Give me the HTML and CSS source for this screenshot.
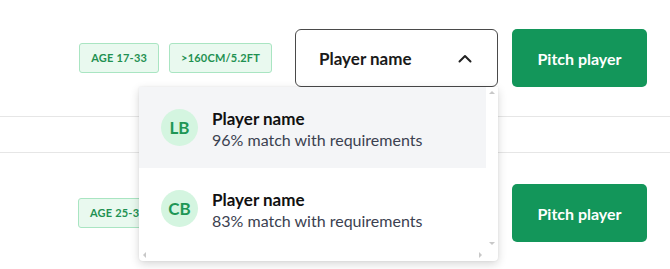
FILE: index.html
```html
<!DOCTYPE html>
<html lang="en">

<head>
    <meta charset="UTF-8">
    <meta name="viewport" content="width=device-width, initial-scale=1.0">
    <title>Pitch players</title>
    <link rel="stylesheet" href="styles.css">
</head>

<body>
    <div class="request-row">
        <div class="tags">
            <span class="tag">Age 17-33</span>
            <span class="tag">&gt;160cm/5.2ft</span>
        </div>
        <div class="player-select open">
            <button class="select-box" type="button">
                <span>Player name</span>
                <svg class="chevron" width="14" height="9" viewBox="0 0 14 9">
                    <path d="M1.5 7.5 L7 2 L12.5 7.5" fill="none" stroke="#222" stroke-width="2" stroke-linecap="round" stroke-linejoin="round"/>
                </svg>
            </button>
            <ul class="player-menu">
                <li class="player-option active">
                    <span class="avatar">LB</span>
                    <div class="player-info">
                        <strong>Player name</strong>
                        <span>96% match with requirements</span>
                    </div>
                </li>
                <li class="player-option">
                    <span class="avatar">CB</span>
                    <div class="player-info">
                        <strong>Player name</strong>
                        <span>83% match with requirements</span>
                    </div>
                </li>
                <li class="scroll-v">
                    <span class="arrow up"></span>
                    <span class="arrow down"></span>
                </li>
                <li class="scroll-h">
                    <span class="arrow left"></span>
                    <span class="arrow right"></span>
                </li>
            </ul>
        </div>
        <button class="pitch-btn" type="button">Pitch player</button>
    </div>

    <div class="spacer-row"></div>

    <!-- second request: mostly hidden under the open menu -->
    <div class="request-row second">
        <div class="tags single">
            <span class="tag">Age 25-35</span>
        </div>
        <div class="player-select">
            <div class="select-box empty"></div>
        </div>
        <button class="pitch-btn" type="button">Pitch player</button>
    </div>
</body>

</html>
```

FILE: styles.css
```css
* {
    margin: 0;
    padding: 0;
    box-sizing: border-box;
    font-family: Lato, "Noto Sans", sans-serif;
}

body {
    background: #ffffff;
    color: #1c1c1c;
    width: 670px;
    height: 269px;
    overflow: hidden;
}

.request-row {
    height: 117px;
    display: flex;
    align-items: center;
    justify-content: flex-end;
    padding-right: 23px;
    border-bottom: 1px solid #e6e6e6;
}

.request-row.second {
    height: 120px;
    border-bottom: none;
}

.spacer-row {
    height: 36px;
    border-bottom: 1px solid #e6e6e6;
}

.tags {
    display: flex;
    gap: 10px;
    margin-right: 23px;
}

.tags.single {
    width: 194px;
}

.tag {
    display: inline-block;
    height: 30px;
    line-height: 28px;
    padding: 0 11px;
    background: #e9f9ef;
    border: 1px solid #a9e5c2;
    border-radius: 3px;
    color: #1f9152;
    font-size: 11px;
    font-weight: 700;
    letter-spacing: 0.2px;
    text-transform: uppercase;
}

.player-select {
    position: relative;
    margin-right: 14px;
}

.select-box {
    width: 203px;
    height: 58px;
    display: flex;
    align-items: center;
    justify-content: space-between;
    padding: 0 25px 0 23px;
    background: #ffffff;
    border: 1px solid #4a4a4a;
    border-radius: 6px;
    font-size: 17px;
    font-weight: 700;
    color: #1a1a1a;
}

.player-menu {
    position: absolute;
    top: 58px;
    right: 0;
    width: 359px;
    height: 174px;
    list-style: none;
    background: #ffffff;
    border-radius: 0 0 4px 4px;
    box-shadow: 0 3px 10px rgba(0, 0, 0, 0.16), 0 0 2px rgba(0, 0, 0, 0.08);
    padding-right: 12px;
    z-index: 10;
}

.player-option {
    height: 81px;
    display: flex;
    align-items: center;
    padding-left: 22px;
    gap: 14px;
}

.player-option.active {
    background: #f4f5f7;
}

.avatar {
    width: 37px;
    height: 37px;
    border-radius: 50%;
    background: #d4f5e0;
    color: #1e9655;
    font-size: 17px;
    font-weight: 700;
    display: flex;
    align-items: center;
    justify-content: center;
}

.player-info {
    display: flex;
    flex-direction: column;
    gap: 1px;
    padding-top: 3px;
}

.player-info strong {
    font-size: 17px;
    font-weight: 700;
    color: #111111;
    line-height: 21px;
}

.player-info span {
    font-size: 16px;
    color: #3b4150;
    line-height: 20px;
}

.scroll-v {
    position: absolute;
    top: 0;
    right: 0;
    width: 12px;
    height: 162px;
}

.scroll-h {
    position: absolute;
    left: 0;
    bottom: 0;
    width: 347px;
    height: 12px;
}

.arrow {
    position: absolute;
    width: 0;
    height: 0;
    border: 3px solid transparent;
}

.arrow.up {
    top: 4px;
    left: 3px;
    border-bottom-color: #c8c8c8;
    border-top-width: 0;
}

.arrow.down {
    bottom: 4px;
    left: 3px;
    border-top-color: #c8c8c8;
    border-bottom-width: 0;
}

.arrow.left {
    left: 4px;
    top: 3px;
    border-right-color: #c8c8c8;
    border-left-width: 0;
}

.arrow.right {
    right: 4px;
    top: 3px;
    border-left-color: #c8c8c8;
    border-right-width: 0;
}

.pitch-btn {
    width: 135px;
    height: 58px;
    background: #13965a;
    color: #ffffff;
    border: none;
    border-radius: 5px;
    font-size: 16px;
    font-weight: 700;
}
```
